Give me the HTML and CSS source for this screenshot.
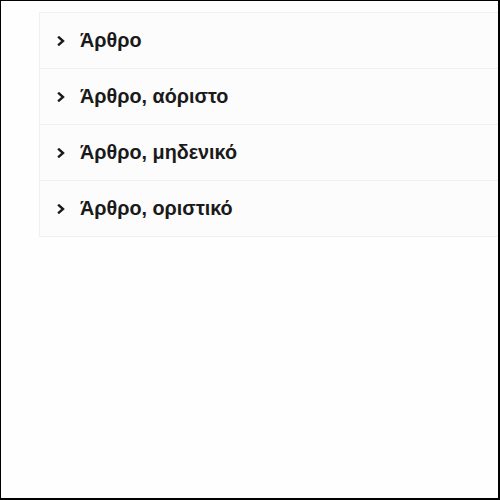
FILE: index.html
```html
<!DOCTYPE html>
<html lang="el">
<head>
<meta charset="utf-8">
<title>Άρθρο</title>
<link rel="stylesheet" href="styles.css">
</head>
<body>
<div class="frame">
  <ul class="accordion">
    <li class="item">
      <svg class="chevron" viewBox="0 0 8 10" width="8" height="10"><path d="M2 1.5 L6 5 L2 8.5"/></svg>
      <span class="label">Άρθρο</span>
    </li>
    <li class="item">
      <svg class="chevron" viewBox="0 0 8 10" width="8" height="10"><path d="M2 1.5 L6 5 L2 8.5"/></svg>
      <span class="label">Άρθρο, αόριστο</span>
    </li>
    <li class="item">
      <svg class="chevron" viewBox="0 0 8 10" width="8" height="10"><path d="M2 1.5 L6 5 L2 8.5"/></svg>
      <span class="label">Άρθρο, μηδενικό</span>
    </li>
    <li class="item">
      <svg class="chevron" viewBox="0 0 8 10" width="8" height="10"><path d="M2 1.5 L6 5 L2 8.5"/></svg>
      <span class="label">Άρθρο, οριστικό</span>
    </li>
  </ul>
</div>
</body>
</html>
```

FILE: styles.css
```css
html, body {
  margin: 0;
  padding: 0;
  background: #fff;
}

.frame {
  box-sizing: border-box;
  width: 500px;
  height: 500px;
  border: 1px solid #000;
  border-right-width: 2px;
  border-bottom-width: 2px;
  padding: 11px 0 0 38px;
  background: #fefefe;
  overflow: hidden;
}

.accordion {
  list-style: none;
  margin: 0;
  padding: 0;
  border: 1px solid #f0f0f0;
  border-right: none;
  background: #fcfcfc;
}

.item {
  display: flex;
  align-items: center;
  gap: 15px;
  height: 55px;
  padding-left: 17px;
  border-top: 1px solid #f0f0f0;
  font-family: "Liberation Sans", Arial, sans-serif;
  font-weight: bold;
  font-size: 19.8px;
  color: #1a1a1a;
}

.item:first-child {
  border-top: none;
}

.chevron {
  flex: none;
  fill: none;
  stroke: #1a1a1a;
  stroke-width: 2.4;
  stroke-linecap: square;
}
```
